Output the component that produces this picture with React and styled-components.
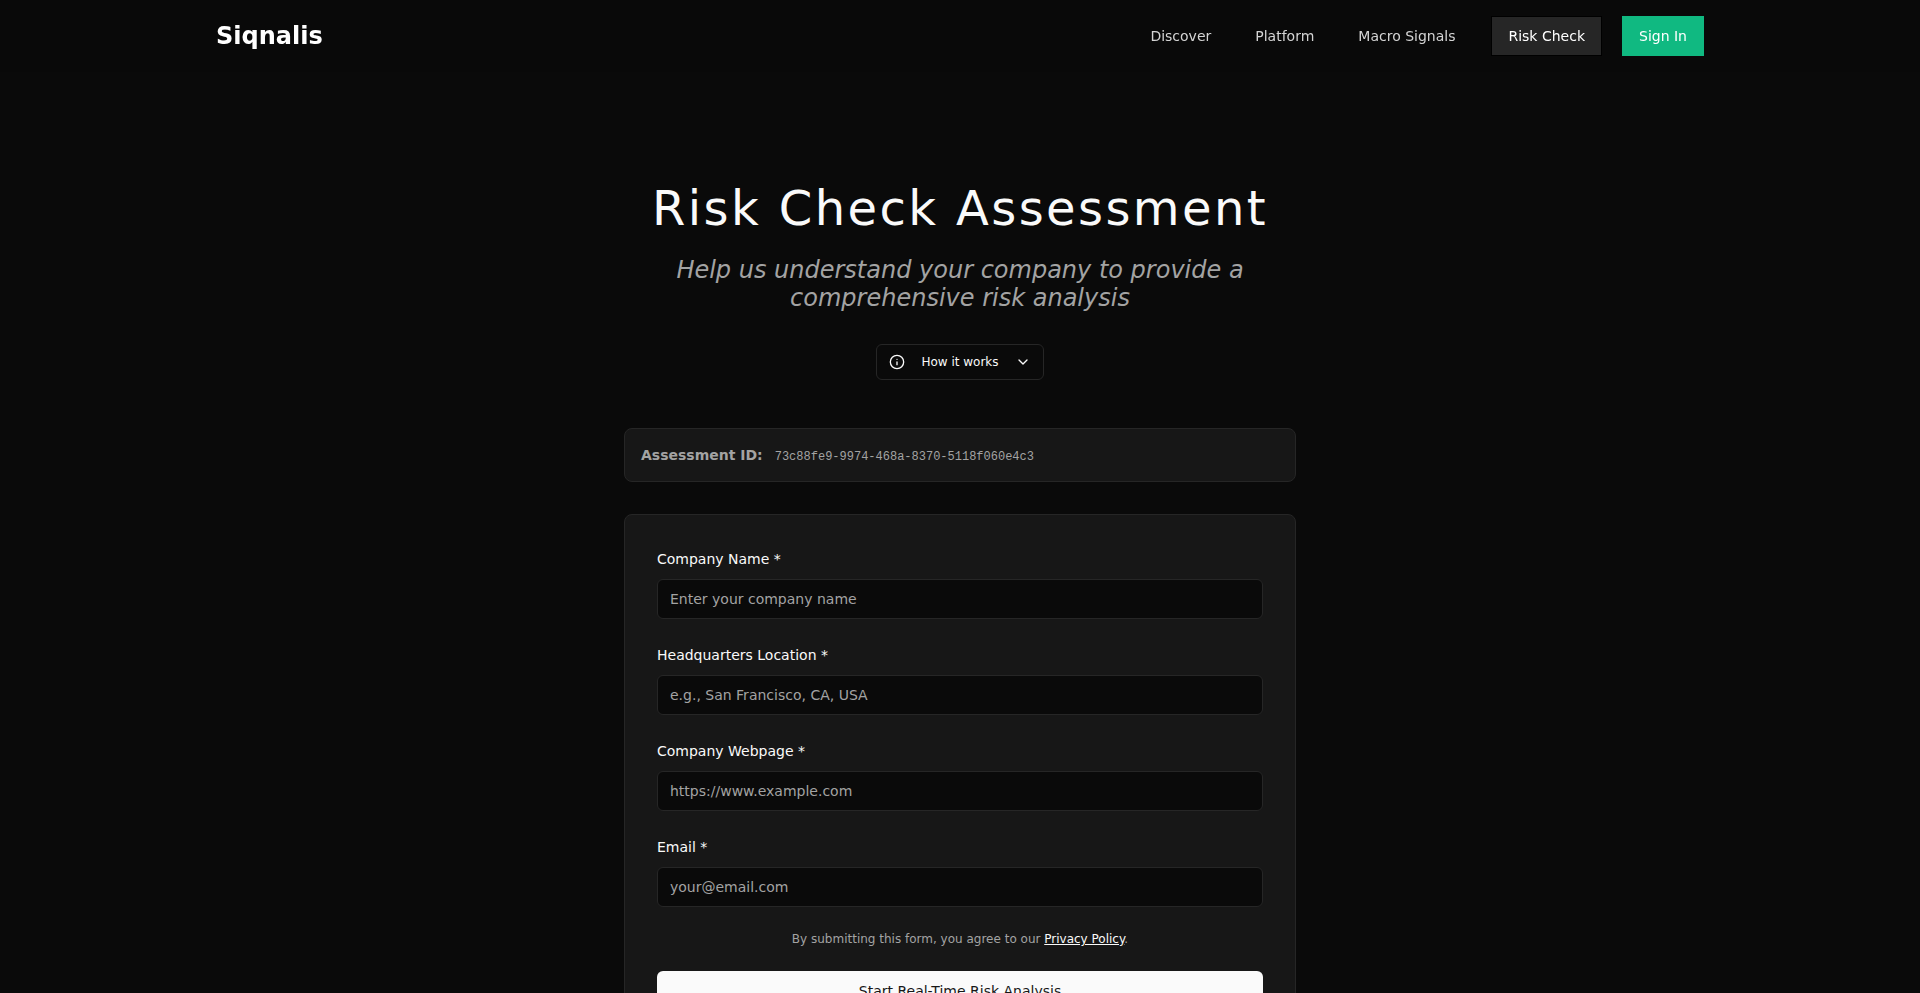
import React from 'react';
import styled, { createGlobalStyle } from 'styled-components';
import { Info, ChevronDown } from 'lucide-react';

const GlobalStyle = createGlobalStyle`
  *, *::before, *::after { box-sizing: border-box; }
  body {
    margin: 0;
    background: #0a0a0a;
    color: #fafafa;
    font-family: "DejaVu Sans", sans-serif;
    font-size: 16px;
    line-height: 24px;
  }
  h1, p { margin: 0; }
`;

const Header = styled.header`
  position: sticky;
  top: 0;
  z-index: 10;
  background: rgba(10, 10, 10, 0.95);
  backdrop-filter: blur(8px);
`;

const HeaderInner = styled.div`
  display: flex;
  align-items: center;
  justify-content: space-between;
  max-width: 1536px;
  height: 72px;
  margin: 0 auto;
  padding: 0 24px;
`;

const Brand = styled.a`
  color: #ffffff;
  font-size: 24px;
  line-height: 32px;
  font-weight: 700;
  text-decoration: none;
`;

const Nav = styled.nav`
  display: flex;
  align-items: center;
  gap: 20px;
`;

const NavLink = styled.a`
  padding: 8px 12px;
  color: #d4d4d4;
  font-size: 14px;
  line-height: 24px;
  text-decoration: none;
`;

const ActiveLink = styled(NavLink)`
  margin-left: 4px;
  padding: 7px 16px;
  border: 1px solid #000000;
  background: #262626;
  color: #ffffff;
`;

const SignInButton = styled.button`
  padding: 7px 16px;
  border: 1px solid #10b981;
  background: #10b981;
  color: #ffffff;
  font: inherit;
  font-size: 14px;
  line-height: 24px;
`;

const Main = styled.main`
  display: flex;
  flex-direction: column;
  align-items: center;
  max-width: 720px;
  margin: 0 auto;
  padding: 104px 24px 96px;
`;

const Title = styled.h1`
  font-size: 48px;
  line-height: 64px;
  font-weight: 400;
  letter-spacing: 0.05em;
  text-align: center;
`;

const Subtitle = styled.p`
  margin-top: 16px;
  color: #a3a3a3;
  font-size: 24px;
  line-height: 28px;
  font-style: italic;
  text-align: center;
`;

const HelpButton = styled.button`
  display: flex;
  align-items: center;
  gap: 16px;
  height: 36px;
  margin-top: 32px;
  padding: 0 12px;
  border: 1px solid #262626;
  border-radius: 6px;
  background: #0a0a0a;
  color: #fafafa;
  font: inherit;
  font-size: 12px;
  line-height: 16px;
`;

const Card = styled.div`
  width: 100%;
  border: 1px solid #262626;
  border-radius: 8px;
  background: #171717;
`;

const IdCard = styled(Card)`
  display: flex;
  align-items: baseline;
  gap: 12px;
  margin-top: 48px;
  padding: 16px;
  color: #a3a3a3;
  font-size: 14px;
  line-height: 20px;
`;

const IdLabel = styled.span`
  font-weight: 700;
`;

const IdValue = styled.code`
  font-family: "Liberation Mono", monospace;
  font-size: 12px;
  line-height: 16px;
`;

const FormCard = styled(Card)`
  display: flex;
  flex-direction: column;
  margin-top: 32px;
  padding: 32px;
`;

const Field = styled.div`
  display: flex;
  flex-direction: column;
  gap: 8px;
  margin-bottom: 24px;
`;

const Label = styled.label`
  font-size: 14px;
  line-height: 24px;
`;

const Input = styled.input`
  width: 100%;
  height: 40px;
  padding: 8px 12px;
  border: 1px solid #262626;
  border-radius: 6px;
  background: #0a0a0a;
  color: #fafafa;
  font: inherit;
  font-size: 14px;
  &::placeholder { color: #a3a3a3; opacity: 1; }
`;

const Terms = styled.p`
  color: #a3a3a3;
  font-size: 12px;
  line-height: 16px;
  text-align: center;
`;

const TermsLink = styled.a`
  color: #fafafa;
  text-decoration: underline;
`;

const SubmitButton = styled.button`
  height: 40px;
  margin-top: 24px;
  border: 0;
  border-radius: 6px;
  background: #fafafa;
  color: #171717;
  font: inherit;
  font-size: 14px;
`;

const fields = [
  { id: 'company', label: 'Company Name *', type: 'text', placeholder: 'Enter your company name' },
  { id: 'location', label: 'Headquarters Location *', type: 'text', placeholder: 'e.g., San Francisco, CA, USA' },
  { id: 'webpage', label: 'Company Webpage *', type: 'url', placeholder: 'https://www.example.com' },
  { id: 'email', label: 'Email *', type: 'email', placeholder: 'your@email.com' },
];

export default function App() {
  return (
    <>
      <GlobalStyle />
      <Header>
        <HeaderInner>
          <Brand href="#">Siqnalis</Brand>
          <Nav>
            <NavLink href="#discover">Discover</NavLink>
            <NavLink href="#platform">Platform</NavLink>
            <NavLink href="#macro">Macro Signals</NavLink>
            <ActiveLink href="#risk" aria-current="page">Risk Check</ActiveLink>
            <SignInButton type="button">Sign In</SignInButton>
          </Nav>
        </HeaderInner>
      </Header>
      <Main>
        <Title>Risk Check Assessment</Title>
        <Subtitle>Help us understand your company to provide a comprehensive risk analysis</Subtitle>
        <HelpButton type="button" aria-expanded="false">
          <Info size={16} />
          How it works
          <ChevronDown size={16} />
        </HelpButton>
        <IdCard>
          <IdLabel>Assessment ID:</IdLabel>
          <IdValue>73c88fe9-9974-468a-8370-5118f060e4c3</IdValue>
        </IdCard>
        <FormCard as="form">
          {fields.map((f) => (
            <Field key={f.id}>
              <Label htmlFor={f.id}>{f.label}</Label>
              <Input id={f.id} type={f.type} placeholder={f.placeholder} />
            </Field>
          ))}
          <Terms>
            By submitting this form, you agree to our <TermsLink href="#privacy">Privacy Policy</TermsLink>.
          </Terms>
          <SubmitButton type="button">Start Real-Time Risk Analysis</SubmitButton>
        </FormCard>
      </Main>
    </>
  );
}
